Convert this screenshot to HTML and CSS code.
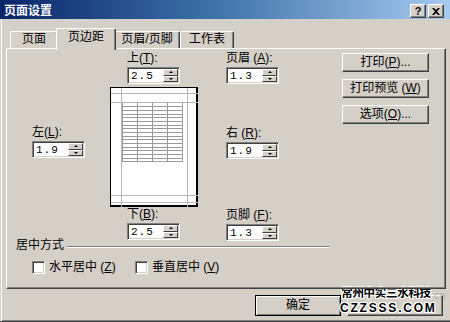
FILE: index.html
```html
<!DOCTYPE html>
<html lang="zh">
<head>
    <meta charset="UTF-8">
    <title>页面设置</title>
    <link rel="stylesheet" href="styles.css">
</head>
<body>
    <div class="dialog">
        <div class="titlebar">
            <span class="title">页面设置</span>
            <span class="caption-buttons">
                <span class="cap help">?</span>
                <span class="cap close">
                    <svg width="8" height="7" viewBox="0 0 8 7"><path d="M0 0h2l2 2 2-2h2L5 3.5 8 7H6L4 5 2 7H0l3-3.5z" fill="#000"/></svg>
                </span>
            </span>
        </div>

        <div class="content">
            <div class="tabs">
                <div class="tab t1">页面</div>
                <div class="tab t2 active">页边距</div>
                <div class="tab t3">页眉/页脚</div>
                <div class="tab t4">工作表</div>
            </div>

            <div class="panel">
                <div class="margins">
                    <!-- left margin -->
                    <div class="col col-left">
                        <div class="lbl">左(<u>L</u>):</div>
                        <div class="spin"><span class="val">1.9</span><span class="arrows"><span class="arr up"></span><span class="arr dn"></span></span></div>
                    </div>

                    <!-- top / preview / bottom -->
                    <div class="col col-mid">
                        <div class="lbl indent">上(<u>T</u>):</div>
                        <div class="spin indent"><span class="val">2.5</span><span class="arrows"><span class="arr up"></span><span class="arr dn"></span></span></div>
                        <div class="page">
                            <svg width="87" height="119" viewBox="0 0 87 119">
                                <g stroke="#b8b8b8" stroke-width="1">
                                    <line x1="10.5" y1="0" x2="10.5" y2="119"/>
                                    <line x1="76.5" y1="0" x2="76.5" y2="119"/>
                                    <line x1="0" y1="5.5" x2="87" y2="5.5"/>
                                    <line x1="0" y1="14.5" x2="87" y2="14.5"/>
                                    <line x1="0" y1="107.5" x2="87" y2="107.5"/>
                                    <line x1="0" y1="114.5" x2="87" y2="114.5"/>
                                </g>
                                <g stroke="#9a9a9a" stroke-width="1">
                                    <line x1="11.5" y1="15" x2="11.5" y2="74"/>
                                    <line x1="26.5" y1="15" x2="26.5" y2="74"/>
                                    <line x1="41.5" y1="15" x2="41.5" y2="74"/>
                                    <line x1="56.5" y1="15" x2="56.5" y2="74"/>
                                    <line x1="71.5" y1="15" x2="71.5" y2="74"/>
                                    <line x1="11" y1="18.5" x2="72" y2="18.5"/>
                                    <line x1="11" y1="22.5" x2="72" y2="22.5"/>
                                    <line x1="11" y1="26.5" x2="72" y2="26.5"/>
                                    <line x1="11" y1="29.5" x2="72" y2="29.5"/>
                                    <line x1="11" y1="33.5" x2="72" y2="33.5"/>
                                    <line x1="11" y1="37.5" x2="72" y2="37.5"/>
                                    <line x1="11" y1="40.5" x2="72" y2="40.5"/>
                                    <line x1="11" y1="44.5" x2="72" y2="44.5"/>
                                    <line x1="11" y1="48.5" x2="72" y2="48.5"/>
                                    <line x1="11" y1="51.5" x2="72" y2="51.5"/>
                                    <line x1="11" y1="55.5" x2="72" y2="55.5"/>
                                    <line x1="11" y1="59.5" x2="72" y2="59.5"/>
                                    <line x1="11" y1="62.5" x2="72" y2="62.5"/>
                                    <line x1="11" y1="66.5" x2="72" y2="66.5"/>
                                    <line x1="11" y1="70.5" x2="72" y2="70.5"/>
                                    <line x1="11" y1="73.5" x2="72" y2="73.5"/>
                                </g>
                            </svg>
                        </div>
                        <div class="lbl indent">下(<u>B</u>):</div>
                        <div class="spin indent"><span class="val">2.5</span><span class="arrows"><span class="arr up"></span><span class="arr dn"></span></span></div>
                    </div>

                    <!-- header / right / footer -->
                    <div class="col col-right">
                        <div class="lbl">页眉 (<u>A</u>):</div>
                        <div class="spin"><span class="val">1.3</span><span class="arrows"><span class="arr up"></span><span class="arr dn"></span></span></div>
                        <div class="lbl gap-right">右 (<u>R</u>):</div>
                        <div class="spin"><span class="val">1.9</span><span class="arrows"><span class="arr up"></span><span class="arr dn"></span></span></div>
                        <div class="lbl gap-foot">页脚 (<u>F</u>):</div>
                        <div class="spin"><span class="val">1.3</span><span class="arrows"><span class="arr up"></span><span class="arr dn"></span></span></div>
                    </div>

                    <div class="col col-btns">
                        <div class="btn">打印(<u>P</u>)...</div>
                        <div class="btn">打印预览 (<u>W</u>)</div>
                        <div class="btn">选项(<u>O</u>)...</div>
                    </div>
                </div>

                <div class="group">
                    <div class="group-head">
                        <span class="group-title">居中方式</span>
                        <span class="etched"></span>
                    </div>
                    <div class="checks">
                        <span class="check first"><span class="box"></span><span>水平居中 (<u>Z</u>)</span></span>
                        <span class="check"><span class="box"></span><span>垂直居中 (<u>V</u>)</span></span>
                    </div>
                </div>
            </div>

            <div class="footer">
                <div class="btn default">确定</div>
                <div class="btn cancel"></div>
            </div>
        </div>

        <div class="watermark">
            <div class="wm-cn">常州中实三水科技</div>
            <div class="wm-en">CZZSSS.COM</div>
        </div>
        <span class="wm-faint">cn</span>
    </div>
</body>
</html>
```

FILE: styles.css
```css
* {
    margin: 0;
    padding: 0;
    box-sizing: border-box;
}

body {
    width: 450px;
    height: 322px;
    overflow: hidden;
    background-color: #d4d0c8;
    font-family: "Liberation Sans", "Noto Sans CJK SC", sans-serif;
    font-size: 12px;
    color: #000;
}

u {
    text-decoration: underline;
    text-underline-offset: 1px;
}

.dialog {
    position: relative;
    width: 450px;
    height: 322px;
    border-bottom: 1px solid #404040;
}

/* title bar */
.titlebar {
    height: 19px;
    display: flex;
    justify-content: space-between;
    align-items: flex-start;
    padding: 0 6px 0 4px;
    background: linear-gradient(to right, #0a246a 0%, #3a6ea5 45%, #a6caf0 100%);
}

.title {
    color: #fff;
    font-weight: bold;
    font-size: 12px;
    line-height: 14px;
    padding-top: 4px;
}

.caption-buttons {
    display: flex;
    gap: 2px;
    padding-top: 4px;
}

.cap {
    width: 16px;
    height: 14px;
    display: flex;
    align-items: center;
    justify-content: center;
    background-color: #d4d0c8;
    border-top: 1px solid #fff;
    border-left: 1px solid #fff;
    border-right: 1px solid #404040;
    border-bottom: 1px solid #404040;
    box-shadow: inset -1px -1px #808080;
}

.help {
    font-weight: bold;
    font-size: 11px;
    line-height: 12px;
}

/* body */
.content {
    margin-left: 1px;
    border-left: 1px solid #fff;
}

.tabs {
    display: flex;
    align-items: flex-end;
    height: 29px;
    padding-left: 8px;
}

.tab {
    height: 17px;
    line-height: 15px;
    text-align: center;
    background-color: #d4d0c8;
    border-top: 1px solid #fff;
    border-left: 1px solid #fff;
    border-right: 1px solid #404040;
    border-radius: 2px 2px 0 0;
    box-shadow: inset -1px 0 #808080;
}

.t1 { width: 48px; }
.t2 { width: 56px; }
.t3 { width: 66px; }
.t4 { width: 54px; }

.tab.active {
    position: relative;
    z-index: 2;
    width: 60px;
    height: 22px;
    margin: 0 -2px -2px;
    line-height: 17px;
}

.panel {
    position: relative;
    z-index: 1;
    margin-left: 4px;
    width: 440px;
    height: 241px;
    border-top: 1px solid #fff;
    border-left: 1px solid #fff;
    border-right: 1px solid #404040;
    border-bottom: 1px solid #404040;
    box-shadow: inset -1px -1px #808080;
}

.margins {
    display: flex;
    height: 189px;
    padding-left: 25px;
}

.col {
    display: flex;
    flex-direction: column;
    align-items: flex-start;
}

.col-left {
    width: 78px;
    padding-top: 76px;
}

.col-mid {
    width: 116px;
    padding-top: 2px;
}

.col-right {
    width: 116px;
    padding-top: 2px;
}

.col-btns {
    width: 87px;
    padding-top: 4px;
    gap: 7px;
}

.lbl {
    height: 14px;
    line-height: 14px;
    margin-bottom: 2px;
    white-space: nowrap;
}

.indent {
    margin-left: 17px;
}

.gap-right {
    margin-top: 42px;
}

.gap-foot {
    margin-top: 49px;
}

/* spinner */
.spin {
    display: flex;
    width: 53px;
    height: 17px;
    background-color: #fff;
    border-top: 1px solid #808080;
    border-left: 1px solid #808080;
    border-right: 1px solid #fff;
    border-bottom: 1px solid #fff;
    box-shadow: inset 1px 1px #404040, inset -1px -1px #d4d0c8;
    padding: 1px;
}

.val {
    flex: 1;
    padding-left: 2px;
    font-family: "Liberation Mono", monospace;
    font-size: 11px;
    line-height: 14px;
    letter-spacing: 1px;
}

.arrows {
    width: 15px;
    display: flex;
    flex-direction: column;
}

.arr {
    flex: 1;
    display: flex;
    align-items: center;
    justify-content: center;
    background-color: #d4d0c8;
    border-top: 1px solid #fff;
    border-left: 1px solid #fff;
    border-right: 1px solid #404040;
    border-bottom: 1px solid #404040;
}

.arr::after {
    content: "";
    border-left: 2px solid transparent;
    border-right: 2px solid transparent;
}

.up::after {
    border-bottom: 2px solid #000;
}

.dn::after {
    border-top: 2px solid #000;
}

/* preview page */
.page {
    margin-top: 3px;
    width: 88px;
    height: 120px;
    background-color: #fff;
    border: 1px solid #000;
    border-right-width: 2px;
    border-bottom-width: 2px;
}

.page svg {
    display: block;
}

/* buttons */
.btn {
    width: 87px;
    height: 19px;
    line-height: 17px;
    text-align: center;
    background-color: #d4d0c8;
    border-top: 1px solid #fff;
    border-left: 1px solid #fff;
    border-right: 1px solid #404040;
    border-bottom: 1px solid #404040;
    box-shadow: inset -1px -1px #808080;
    white-space: nowrap;
}

/* centering group */
.group {
    margin-left: 9px;
    width: 314px;
}

.group-head {
    display: flex;
    align-items: center;
    height: 14px;
}

.group-title {
    line-height: 14px;
    padding-right: 3px;
}

.etched {
    flex: 1;
    height: 2px;
    border-top: 1px solid #808080;
    border-bottom: 1px solid #fff;
    margin-top: 3px;
}

.checks {
    display: flex;
    margin-top: 8px;
    padding-left: 16px;
}

.check {
    display: flex;
    align-items: center;
    gap: 4px;
    line-height: 14px;
    white-space: nowrap;
}

.check.first {
    width: 103px;
}

.box {
    width: 13px;
    height: 13px;
    background-color: #fff;
    border-top: 1px solid #808080;
    border-left: 1px solid #808080;
    border-right: 1px solid #fff;
    border-bottom: 1px solid #fff;
    box-shadow: inset 1px 1px #404040, inset -1px -1px #d4d0c8;
}

/* footer */
.footer {
    display: flex;
    gap: 6px;
    height: 32px;
    padding: 6px 0 0 253px;
    border-bottom: 1px solid #808080;
}

.footer .btn {
    width: 86px;
    height: 21px;
    line-height: 19px;
}

.btn.default {
    border: 1px solid #000;
    box-shadow: inset 1px 1px #fff, inset -1px -1px #808080;
}

.btn.cancel {
    width: 96px;
}

/* watermark over the buttons */
.watermark {
    position: absolute;
    left: 340px;
    top: 286px;
    width: 92px;
    text-align: center;
    color: #000;
    text-shadow: 1px 0 #fff, -1px 0 #fff, 0 1px #fff, 0 -1px #fff, 1px 1px #fff, -1px -1px #fff, 1px -1px #fff, -1px 1px #fff;
}

.wm-cn {
    font-weight: bold;
    font-size: 11.5px;
    line-height: 15px;
    letter-spacing: -0.3px;
}

.wm-en {
    font-weight: bold;
    font-size: 12px;
    line-height: 15px;
    letter-spacing: 1.8px;
}

.wm-faint {
    position: absolute;
    left: 434px;
    top: 289px;
    font-size: 11px;
    line-height: 12px;
    color: #a8b0b8;
}
```
